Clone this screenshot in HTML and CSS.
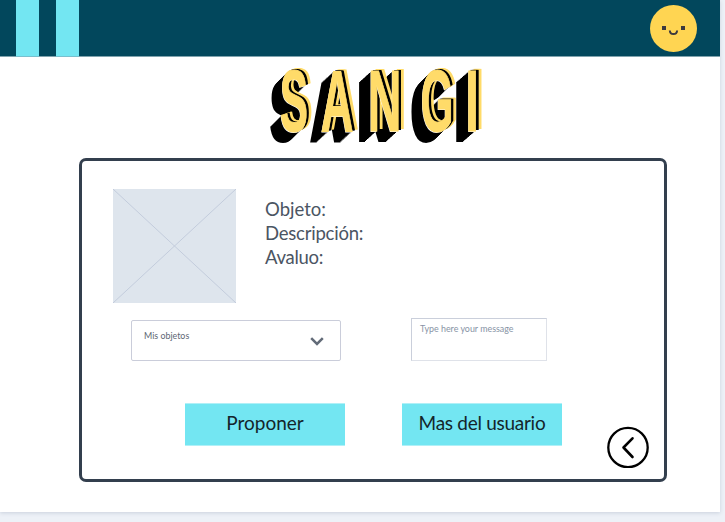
FILE: index.html
```html
<!DOCTYPE html>
<html lang="es">
<head>
<meta charset="utf-8">
<title>SANGI</title>
<link rel="stylesheet" href="styles.css">
</head>
<body>
<div class="page">
  <header class="topbar">
    <div class="stripe"></div>
    <div class="stripe"></div>
    <svg class="avatar" viewBox="0 0 48 48">
      <circle cx="23.500" cy="24.500" r="23.500" fill="#ffd552"/>
      <path d="M12 22h4v4h-4zM31 22h4v4h-4z" fill="#3d3a3e"/>
      <path d="M19.800 26.500c.3 4.800 7 4.800 7.300 0" fill="none" stroke="#3d3a3e" stroke-width="2"/>
    </svg>
  </header>
  <main>
    <h1 class="logo"><span class="s">S</span><span class="a">A</span><span class="n">N</span><span class="g">G</span><span class="i">I</span></h1>
    <section class="card">
      <div class="item">
        <svg class="thumb" viewBox="0 0 123 114">
          <path d="M0 0L123 114M123 0L0 114" stroke="#c3ccdc" fill="none"/>
        </svg>
        <div class="info">
          <p class="l1">Objeto:</p>
          <p class="l2">Descripción:</p>
          <p class="l3">Avaluo:</p>
        </div>
      </div>
      <div class="fields">
        <div class="select"><span>Mis objetos</span>
          <svg class="chevron" viewBox="0 0 14 9"><path d="M1.200 1.200L7 7L12.800 1.200" fill="none" stroke="#626b78" stroke-width="2.500"/></svg>
        </div>
        <div class="message"><span>Type here your message</span></div>
      </div>
      <div class="actions">
        <div class="button"><span class="b1">Proponer</span></div>
        <div class="button"><span class="b2">Mas del usuario</span></div>
        <svg class="back" viewBox="0 0 42 42">
          <circle cx="21" cy="21.500" r="19.700" fill="none" stroke="#000" stroke-width="2.300"/>
          <path d="M25.500 12.300L16.500 21.500L25.500 31" fill="none" stroke="#000" stroke-width="2.600" stroke-linecap="round" stroke-linejoin="round"/>
        </svg>
      </div>
    </section>
  </main>
</div>
</body>
</html>
```
FILE: styles.css
```css
* { box-sizing: border-box; }
body {
  margin: 0;
  height: 522px;
  overflow: hidden;
  background: #edf1f7;
  font-family: Lato, sans-serif;
}
.page {
  width: 720px;
  height: 512px;
  background: #fff;
  box-shadow: 0 1px 4px #c9d0dc;
}
.topbar {
  display: flex;
  gap: 17px;
  height: 57px;
  padding-left: 16px;
  background: #02475c;
  border-bottom: 1px solid #80a3ae;
}
.stripe { width: 23px; height: 57px; background: linear-gradient(#73e6f2 56px, #79bfce 56px); }
.avatar { width: 48px; height: 48px; margin: 4px 22px 0 auto; }
.logo {
  display: flex;
  width: 500px;
  height: 101px;
  margin: 0;
  font: bold 84px/87px "Liberation Sans", Arial, sans-serif;
  color: #ffdb69;
  -webkit-text-stroke: 1px #ffdb69;
  transform: translate(280px, 0) scale(.5, 1.03);
  transform-origin: left top;
  text-shadow: -1px 1px 0 #fff, 3px -1px 0 #000, 5px -1px 0 #000, 10px -2px 0 #ffdb69, 8px -2px 0 #ffdb69,
    -2px 1px 0 #000, -4px 2px 0 #000, -6px 3px 0 #000, -8px 4px 0 #000,
    -10px 5px 0 #000, -12px 6px 0 #000, -14px 7px 0 #000, -16px 8px 0 #000,
    -18px 9px 0 #000, -20px 10px 0 #000, -22px 11px 0 #000;
}
.logo span { transform-origin: center top; }
.a { margin-left: 28px; transform: scaleX(1.08); }
.n { margin-left: 34px; transform: scaleX(1.1); }
.g { margin-left: 42px; }
.i { margin-left: 26px; transform: scaleX(1.15); }
.card {
  width: 588px;
  height: 324px;
  margin-left: 79px;
  padding: 28px 0 0 31px;
  border: 3px solid #333f4e;
  border-radius: 7px;
}
.item { display: flex; gap: 29px; }
.thumb { width: 123px; height: 114px; background: #dee5ed; }
.info { padding-top: 8px; }
.info p {
  margin: 0;
  font-size: 18.500px;
  line-height: 24px;
  color: #4b5563;
  white-space: nowrap;
}
.info .l2 { letter-spacing: -.22px; }
.info .l3 { letter-spacing: -.3px; }
.fields { display: flex; gap: 70px; margin: 15px 0 0 18px; }
.select {
  display: flex;
  justify-content: space-between;
  width: 210px;
  height: 41px;
  margin-top: 2px;
  padding: 9px 16px 0 12px;
  border: 1px solid #cacdda;
  border-radius: 2px;
  font-size: 8.900px;
  line-height: 11px;
  color: #5d6673;
}
.chevron { width: 14px; height: 9px; margin-top: 7px; }
.message {
  width: 136px;
  height: 43px;
  padding: 4px 0 0 8px;
  border: 1px solid #cacfdb;
  border-right-color: #dfe2e9;
  border-bottom-color: #dfe2e9;
  font-size: 8.900px;
  line-height: 11px;
  color: #8793a5;
  white-space: nowrap;
}
.actions { display: flex; margin: 42px 0 0 72px; }
.button {
  width: 160px;
  height: 43px;
  margin-right: 57px;
  border: solid #b0f0f7;
  border-width: 1px 0;
  background: #73e6f2;
  color: #14252a;
  font-size: 19px;
  line-height: 38px;
  text-align: center;
}
.b2 { letter-spacing: -.28px; }
.button + .button { margin-right: 45px; }
.back { width: 42px; height: 42px; margin-top: 23px; }
```
